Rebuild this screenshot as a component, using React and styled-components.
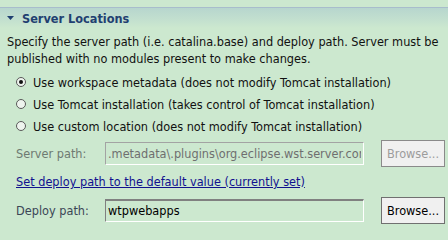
import React from 'react'
import styled, { createGlobalStyle } from 'styled-components'

const GlobalStyle = createGlobalStyle`
    html, body {
        margin: 0;
        padding: 0;
        background: #cce8cf;
    }
`

// Section page
const Page = styled.div`
    width: 448px;
    height: 225px;
    overflow: hidden;
    background: #cce8cf;
    font-family: "DejaVu Sans Condensed", "DejaVu Sans", sans-serif;
    font-stretch: condensed;
    font-size: 12.6px;
    color: #111;
    padding-top: 7px;
    box-sizing: border-box;
`
const Header = styled.div`
    height: 20px;
    border-top: 1px solid #a8bdcc;
    background: linear-gradient(to bottom, #b7d6ce 0%, #c3e0cf 60%, #cce8cf 100%);
    display: flex;
    align-items: center;
    padding-left: 7px;
    gap: 8px;
`
const Title = styled.span`
    font-weight: bold;
    color: #1f3f71;
    font-size: 12.6px;
`
const Body = styled.div`
    padding: 0 0 0 7px;
`
const Description = styled.p`
    margin: 5px 0 0;
    line-height: 17px;
    white-space: nowrap;
`
const RadioList = styled.div`
    display: flex;
    flex-direction: column;
    margin-top: 4px;
    padding-left: 16px;
`
const RadioRow = styled.label`
    display: flex;
    align-items: center;
    gap: 7px;
    height: 22px;
`
const Radio = styled.span`
    width: 8px;
    height: 8px;
    border: 1.5px solid #595959;
    border-radius: 50%;
    background: #eef4ee;
    display: flex;
    align-items: center;
    justify-content: center;
    flex-shrink: 0;

    &::after {
        content: '';
        width: 4px;
        height: 4px;
        border-radius: 50%;
        background: ${p => (p.$checked ? '#111' : 'transparent')};
    }
`
const FieldRow = styled.div`
    display: grid;
    grid-template-columns: 72px 259px 64px;
    column-gap: 17px;
    align-items: center;
    height: 28px;
    margin-top: ${p => p.$top}px;
    padding-left: 16px;
`
const Label = styled.span`
    color: ${p => (p.$disabled ? '#6e7a72' : '#3b4656')};
    white-space: nowrap;
`
const Input = styled.input`
    box-sizing: border-box;
    height: 23px;
    width: 100%;
    margin: 0;
    padding: 0 2px;
    font: inherit;
    background: transparent;
    color: ${p => (p.disabled ? '#6f6f6f' : '#000')};
    border: 1px solid;
    border-top-width: ${p => (p.disabled ? 1 : 2)}px;
    border-color: ${p => (p.disabled ? '#a3a3a3' : '#808080')} #fff #fff
        ${p => (p.disabled ? '#a3a3a3' : '#808080')};
    outline: none;
`
const Button = styled.button`
    box-sizing: border-box;
    height: 27px;
    width: 64px;
    margin: 0;
    padding: 0;
    font: inherit;
    background: #f0f0f0;
    color: ${p => (p.disabled ? '#9c9c9c' : '#000')};
    border: 1px solid ${p => (p.disabled ? '#8a8a8a' : '#707070')};
    border-radius: 0;
`
const LinkRow = styled.div`
    margin-top: 6px;
    padding-left: 16px;
    line-height: 17px;
`
const Link = styled.a`
    color: #11118f;
    text-decoration: underline;
    cursor: pointer;
`

const Triangle = () => (
    <svg width="7" height="4" viewBox="0 0 7 4">
        <polygon points="0,0 7,0 3.5,4" fill="#1f3f71" />
    </svg>
)

const options = [
    { text: 'Use workspace metadata (does not modify Tomcat installation)', checked: true },
    { text: 'Use Tomcat installation (takes control of Tomcat installation)', checked: false },
    { text: 'Use custom location (does not modify Tomcat installation)', checked: false },
]

const App = () => {
    return (
        <Page>
            <GlobalStyle />
            <Header>
                <Triangle />
                <Title>Server Locations</Title>
            </Header>
            <Body>
                <Description>
                    Specify the server path (i.e. catalina.base) and deploy path. Server must be
                    <br />
                    published with no modules present to make changes.
                </Description>
            </Body>
            <RadioList>
                {options.map(o => (
                    <RadioRow key={o.text}>
                        <Radio $checked={o.checked} />
                        <span>{o.text}</span>
                    </RadioRow>
                ))}
            </RadioList>
            <FieldRow $top={2}>
                <Label $disabled>Server path:</Label>
                <Input disabled value=".metadata\.plugins\org.eclipse.wst.server.core" readOnly />
                <Button disabled>Browse...</Button>
            </FieldRow>
            <LinkRow>
                <Link>Set deploy path to the default value (currently set)</Link>
            </LinkRow>
            <FieldRow $top={6}>
                <Label>Deploy path:</Label>
                <Input value="wtpwebapps" readOnly />
                <Button>Browse...</Button>
            </FieldRow>
        </Page>
    )
}

export default App
